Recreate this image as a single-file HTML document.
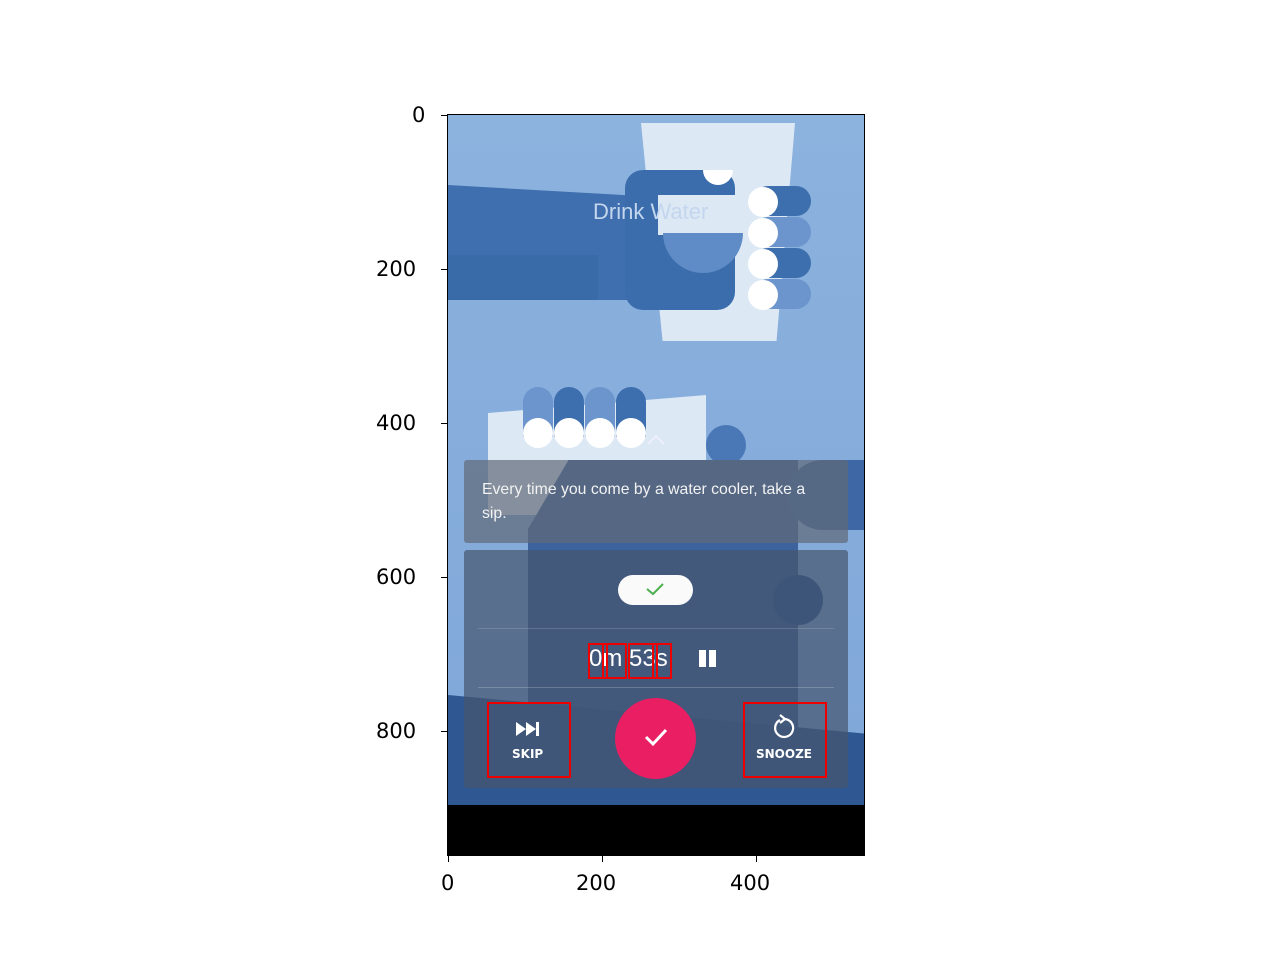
<!DOCTYPE html>
<html><head><style>
body{margin:0;width:1280px;height:960px;background:#fff;position:relative;overflow:hidden;font-family:"DejaVu Sans","Liberation Sans",sans-serif}
.a{position:absolute}
#ph{left:448px;top:115px;width:416px;height:740px;overflow:hidden;background:#8ab0dd}
.tk{position:absolute;background:#000}
.lb{position:absolute;font-size:21px;color:#000}
.rb{position:absolute;border:2px solid #e00}
</style></head><body>
<div id="ph" class="a">
 <div class="a" style="left:0;top:0;width:416px;height:690px;background:linear-gradient(#8cb2de,#7fa7d8)"></div>
 <div class="a" style="left:193px;top:8px;width:154px;height:218px;background:#dde8f5;clip-path:polygon(0 0,100% 0,88% 100%,14% 100%)"></div>
 <div class="a" style="left:0;top:70px;width:200px;height:115px;background:#3f6fae;clip-path:polygon(0 0,100% 10%,100% 100%,0 100%)"></div>
 <div class="a" style="left:0;top:140px;width:150px;height:45px;background:#3a6ba9"></div>
 <div class="a" style="left:177px;top:55px;width:110px;height:140px;background:#3b6dac;border-radius:18px"></div>
 <div class="a" style="left:210px;top:80px;width:90px;height:40px;background:#dde8f5"></div>
 <div class="a" style="left:215px;top:118px;width:80px;height:40px;background:#5f8cc6;border-radius:0 0 40px 40px"></div>
 <div class="a" style="left:255px;top:55px;width:30px;height:15px;background:#fff;border-radius:0 0 15px 15px"></div>
 <div class="a" style="left:305px;top:71px;width:58px;height:30px;background:#3d6ead;border-radius:15px"></div>
 <div class="a" style="left:305px;top:102px;width:58px;height:30px;background:#6b95cc;border-radius:15px"></div>
 <div class="a" style="left:305px;top:133px;width:58px;height:30px;background:#3d6ead;border-radius:15px"></div>
 <div class="a" style="left:305px;top:164px;width:58px;height:30px;background:#6b95cc;border-radius:15px"></div>
 <div class="a" style="left:300px;top:72px;width:30px;height:30px;background:#fff;border-radius:50%"></div>
 <div class="a" style="left:300px;top:103px;width:30px;height:30px;background:#fff;border-radius:50%"></div>
 <div class="a" style="left:300px;top:134px;width:30px;height:30px;background:#fff;border-radius:50%"></div>
 <div class="a" style="left:300px;top:165px;width:30px;height:30px;background:#fff;border-radius:50%"></div>
 <div class="a" style="left:145px;top:84px;font-family:'Liberation Sans',sans-serif;font-size:22px;color:#c4d6ee">Drink Water</div>
 <div class="a" style="left:40px;top:280px;width:218px;height:120px;background:#dde8f5;clip-path:polygon(0 15%,100% 0,100% 100%,0 100%)"></div>
 <div class="a" style="left:75px;top:272px;width:30px;height:50px;background:#6b95cc;border-radius:15px 15px 0 0"></div>
 <div class="a" style="left:106px;top:272px;width:30px;height:50px;background:#3d6ead;border-radius:15px 15px 0 0"></div>
 <div class="a" style="left:137px;top:272px;width:30px;height:50px;background:#6b95cc;border-radius:15px 15px 0 0"></div>
 <div class="a" style="left:168px;top:272px;width:30px;height:50px;background:#3d6ead;border-radius:15px 15px 0 0"></div>
 <div class="a" style="left:75px;top:303px;width:30px;height:30px;background:#fff;border-radius:50%"></div>
 <div class="a" style="left:106px;top:303px;width:30px;height:30px;background:#fff;border-radius:50%"></div>
 <div class="a" style="left:137px;top:303px;width:30px;height:30px;background:#fff;border-radius:50%"></div>
 <div class="a" style="left:168px;top:303px;width:30px;height:30px;background:#fff;border-radius:50%"></div>
 <div class="a" style="left:258px;top:310px;width:40px;height:40px;background:#4a78b6;border-radius:50%"></div>
 <div class="a" style="left:80px;top:345px;width:270px;height:345px;background:#3d639e;clip-path:polygon(15% 0,100% 0,100% 100%,0 100%,0 20%)"></div>
 <div class="a" style="left:325px;top:460px;width:50px;height:50px;background:#2b5590;border-radius:50%"></div>
 <div class="a" style="left:340px;top:345px;width:76px;height:70px;background:#3d68a5;border-radius:35px 0 0 35px"></div>
 <div class="a" style="left:0;top:580px;width:416px;height:110px;background:#2f5892;clip-path:polygon(0 0,100% 35%,100% 100%,0 100%)"></div>
 <div class="a" style="left:16px;top:345px;width:384px;height:83px;background:rgba(95,105,120,.7);border-radius:3px"></div>
 <div class="a" style="left:34px;top:363px;width:335px;font-family:'Liberation Sans',sans-serif;font-size:15.8px;line-height:24px;color:#f2f2f2">Every time you come by a water cooler, take a sip.</div>
 <div class="a" style="left:202px;top:322px;width:10px;height:10px;border-left:2px solid #eef;border-top:2px solid #eef;transform:rotate(45deg)"></div>
 <div class="a" style="left:16px;top:435px;width:384px;height:238px;background:rgba(70,85,110,.7);border-radius:3px"></div>
 <div class="a" style="left:170px;top:460px;width:75px;height:30px;background:#fafafa;border-radius:15px"></div>
 <svg class="a" style="left:197px;top:466px" width="20" height="16"><path d="M2 8 L8 13 L18 3" stroke="#4caf50" stroke-width="2" fill="none"/></svg>
 <div class="a" style="left:30px;top:513px;width:356px;height:1px;background:rgba(255,255,255,.15)"></div>
 <div class="a" style="left:141px;top:530px;font-family:'Liberation Sans',sans-serif;font-size:24px;color:#fff">0m 53s</div>
 <div class="a" style="left:251px;top:535px;width:7px;height:17px;background:#fff"></div>
 <div class="a" style="left:261px;top:535px;width:7px;height:17px;background:#fff"></div>
 <div class="a" style="left:30px;top:572px;width:356px;height:1px;background:rgba(255,255,255,.2)"></div>
 <div class="a" style="left:167px;top:583px;width:81px;height:81px;background:#e91e63;border-radius:50%"></div>
 <svg class="a" style="left:195px;top:610px" width="26" height="24"><path d="M3 12 L10 19 L23 5" stroke="#fff" stroke-width="3" fill="none"/></svg>
 <svg class="a" style="left:67px;top:606px" width="26" height="16"><path d="M1 1 L11 8 L1 15Z M11 1 L21 8 L11 15Z" fill="#fff"/><rect x="21" y="1" width="3" height="14" fill="#fff"/></svg>
 <div class="a" style="left:64px;top:632px;font-size:12px;font-weight:bold;color:#fff">SKIP</div>
 <svg class="a" style="left:323px;top:598px" width="26" height="28"><path d="M9 7 A9 9 0 1 0 13 6" stroke="#fff" stroke-width="2.2" fill="none"/><path d="M9 2 L14 6 L9 10" stroke="#fff" stroke-width="2.2" fill="none"/></svg>
 <div class="a" style="left:308px;top:632px;font-size:12px;font-weight:bold;color:#fff">SNOOZE</div>
 <div class="a" style="left:0;top:690px;width:416px;height:50px;background:#000"></div>
</div>
<div class="a" style="left:447px;top:114px;width:416px;height:740px;border:1px solid #000"></div>
<div class="rb" style="left:588px;top:643px;width:16px;height:32px"></div>
<div class="rb" style="left:602px;top:643px;width:21px;height:32px"></div>
<div class="rb" style="left:628px;top:643px;width:26px;height:32px"></div>
<div class="rb" style="left:652px;top:643px;width:16px;height:32px"></div>
<div class="rb" style="left:487px;top:702px;width:80px;height:72px"></div>
<div class="rb" style="left:743px;top:702px;width:80px;height:72px"></div>
<div class="tk" style="left:441px;top:115px;width:7px;height:1px"></div>
<div class="tk" style="left:441px;top:269px;width:7px;height:1px"></div>
<div class="tk" style="left:441px;top:423px;width:7px;height:1px"></div>
<div class="tk" style="left:441px;top:577px;width:7px;height:1px"></div>
<div class="tk" style="left:441px;top:731px;width:7px;height:1px"></div>
<div class="tk" style="left:448px;top:855px;width:1px;height:7px"></div>
<div class="tk" style="left:602px;top:855px;width:1px;height:7px"></div>
<div class="tk" style="left:756px;top:855px;width:1px;height:7px"></div>
<div class="lb" style="left:412px;top:103px">0</div>
<div class="lb" style="left:376px;top:257px">200</div>
<div class="lb" style="left:376px;top:411px">400</div>
<div class="lb" style="left:376px;top:565px">600</div>
<div class="lb" style="left:376px;top:719px">800</div>
<div class="lb" style="left:441px;top:871px">0</div>
<div class="lb" style="left:576px;top:871px">200</div>
<div class="lb" style="left:730px;top:871px">400</div>
</body></html>
